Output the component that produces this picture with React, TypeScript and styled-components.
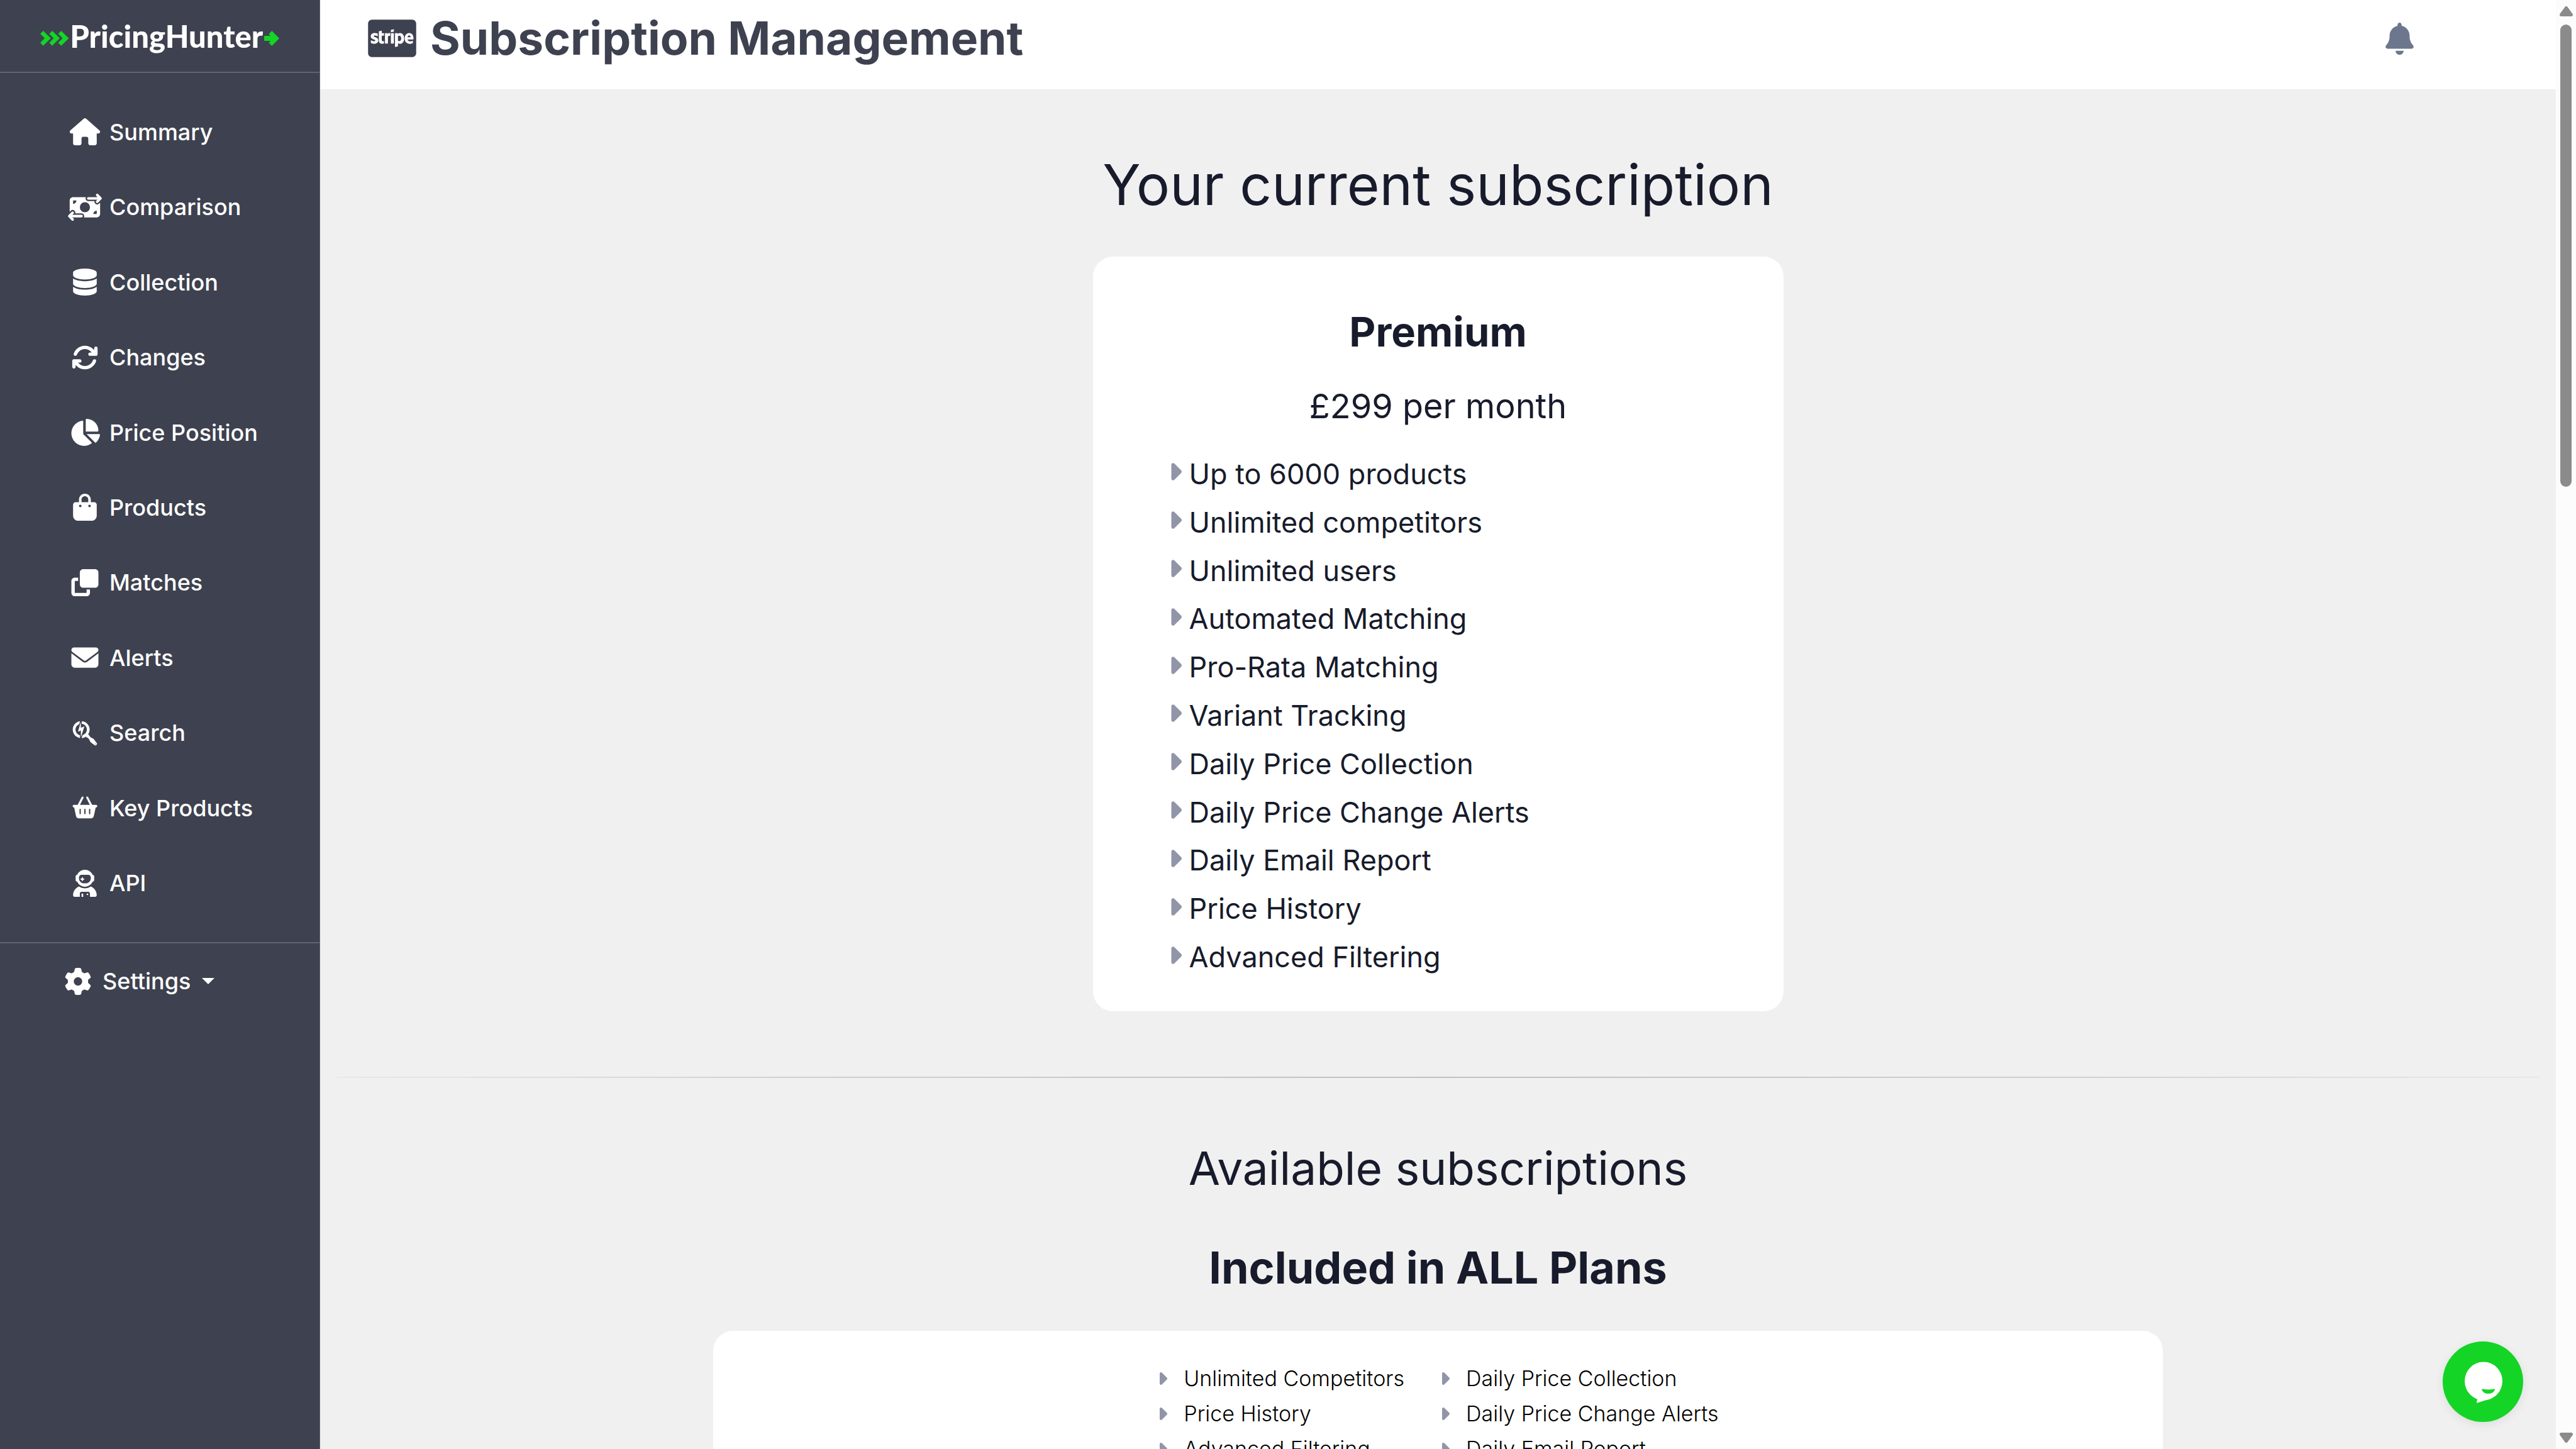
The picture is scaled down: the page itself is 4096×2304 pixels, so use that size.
import React from 'react';
import styled, { createGlobalStyle } from 'styled-components';
import {
  FaArrowsRotate,
  FaBagShopping,
  FaBell,
  FaCaretRight,
  FaCcStripe,
  FaChartPie,
  FaClone,
  FaDatabase,
  FaEnvelope,
  FaGear,
  FaHouse,
  FaMoneyBillTransfer,
  FaSearchengin,
  FaUserAstronaut,
} from 'react-icons/fa6';

const color = {
  slate: '#3e414f',
  slateLine: '#5f6473',
  ink: '#171b2b',
  page: '#f0f0f0',
  green: '#14d426',
  caret: '#9195a8',
  bell: '#6c778d',
  thumb: '#8b8b8b',
};

const GlobalStyle = createGlobalStyle`
  *, *::before, *::after { box-sizing: border-box; }
  body {
    margin: 0;
    color: ${color.ink};
    background: ${color.page};
    font-family: Inter, "Liberation Sans", sans-serif;
  }
  h1, h2, h3, p, ul { margin: 0; padding: 0; }
  ul { list-style: none; }
  svg { display: block; flex: none; }
  button { border: 0; padding: 0; background: none; font: inherit; color: inherit; cursor: pointer; }
`;

const Shell = styled.div`
  display: grid;
  grid-template-columns: 509px minmax(0, 1fr) 32px;
  height: 100vh;
  overflow: hidden;
`;

/* Sidebar */

const Sidebar = styled.aside`
  background: ${color.slate};
  border-right: 1px solid ${color.slateLine};
  color: #fff;
`;

const Brand = styled.a`
  display: flex;
  align-items: center;
  justify-content: center;
  gap: 2px;
  height: 116px;
  border-bottom: 2px solid ${color.slateLine};
  color: #fff;
  font: 900 49px/60px Lato, sans-serif;
  text-decoration: none;
`;

const BrandArrow = styled.svg`
  height: 24px;
  margin-top: 8px;
  fill: ${color.green};
`;

const NavList = styled.ul`
  display: grid;
  grid-auto-rows: 1fr;
  min-height: 1314px;
  margin: 34px 0;
`;

const NavLink = styled.a`
  display: flex;
  align-items: center;
  gap: 12px;
  height: 100%;
  padding-left: 108px;
  color: #fff;
  font-size: 36px;
  font-weight: 500;
  text-decoration: none;
`;

const NavIcon = styled.span`
  svg {
    width: 54px;
    height: 43px;
  }
`;

const SettingsBar = styled.div`
  border-top: 2px solid ${color.slateLine};
  padding: 30px 0 30px 97px;
`;

const SettingsButton = styled.button`
  display: flex;
  align-items: center;
  gap: 12px;
  height: 60px;
  font-size: 36px;
  font-weight: 500;
`;

const DropCaret = styled.span`
  margin-left: 6px;
  border: 10px solid transparent;
  border-top-color: #fff;
  border-bottom: 0;
`;

/* Main column */

const Main = styled.main`
  min-width: 0;
  overflow: hidden;
`;

const TopBar = styled.header`
  display: flex;
  align-items: center;
  gap: 22px;
  height: 142px;
  padding: 0 226px 20px 76px;
  background: #fff;
  color: ${color.slate};
`;

const StripeMark = styled(FaCcStripe)`
  width: 77px;
  height: 68px;
`;

const PageTitle = styled.h1`
  flex: 1;
  font-size: 73px;
  line-height: 88px;
  font-weight: 700;
`;

const BellButton = styled.button`
  color: ${color.bell};

  svg {
    width: 45px;
    height: 51px;
  }
`;

const Content = styled.div`
  display: flex;
  flex-direction: column;
  align-items: center;
  padding: 100px 26px 0;
`;

const headingSize = { large: 89, medium: 73, small: 70 };

const Heading = styled.h2<{ $size: keyof typeof headingSize; $bold?: boolean }>`
  font-size: ${(p) => headingSize[p.$size]}px;
  line-height: 104px;
  font-weight: ${(p) => (p.$bold ? 700 : 400)};
`;

const Card = styled.section`
  border-radius: 32px;
  background: #fff;
`;

const CurrentPlan = styled(Card)`
  width: 1098px;
  margin-top: 62px;
  padding: 80px 48px 48px;
`;

const PlanName = styled.h3`
  font-size: 65px;
  line-height: 80px;
  font-weight: 700;
  text-align: center;
`;

const PlanPrice = styled.p`
  margin: 46px 0 37px;
  font-size: 54px;
  line-height: 64px;
  text-align: center;
`;

const PlanFeatures = styled.ul`
  display: grid;
  grid-auto-rows: 1fr;
  min-height: 845px;
  padding-left: 71px;
`;

const Feature = styled.li`
  display: flex;
  align-items: center;
  gap: 12px;
  font-size: 45px;
`;

const FeatureCaret = styled(FaCaretRight)`
  width: 22px;
  height: 44px;
  margin-bottom: 6px;
  color: ${color.caret};
`;

const Divider = styled.hr`
  width: 100%;
  height: 2px;
  margin: 104px 0 92px;
  border: 0;
  background: linear-gradient(
    90deg,
    rgba(0, 0, 0, 0.03),
    rgba(0, 0, 0, 0.13) 20%,
    rgba(0, 0, 0, 0.2) 50%,
    rgba(0, 0, 0, 0.13) 80%,
    rgba(0, 0, 0, 0.03)
  );
`;

const SubHeadings = styled.div`
  display: grid;
  justify-items: center;
  gap: 54px;
`;

const SharedPlan = styled(Card)`
  display: flex;
  justify-content: center;
  gap: 56px;
  width: 65.8%;
  margin-top: 48px;
  padding: 48px;
`;

const SharedFeature = styled.li`
  display: flex;
  align-items: center;
  gap: 26px;
  color: #000;
  font-size: 34px;
  line-height: 56px;
  font-weight: 300;
`;

const SharedCaret = styled(FaCaretRight)`
  width: 16px;
  height: 32px;
  color: ${color.caret};
`;

/* Scroll rail */

const Rail = styled.div`
  display: flex;
  flex-direction: column;
  align-items: center;
  justify-content: space-between;
  padding: 10px 0;
  background: #fcfcfc;
`;

const RailTrack = styled.div`
  flex: 1;
  padding: 13px 0;
`;

const RailThumb = styled.div`
  width: 18px;
  height: 33%;
  border-radius: 9px;
  background: ${color.thumb};
`;

const RailArrow = styled.svg`
  width: 21px;
  height: 16px;
  fill: ${color.thumb};
  stroke: ${color.thumb};
  stroke-width: 5;
  stroke-linejoin: round;
`;

const ChatButton = styled.button`
  position: absolute;
  right: 84px;
  bottom: 43px;
  width: 128px;
  height: 128px;
  border-radius: 50%;
  background: ${color.green};
  box-shadow: 0 4px 16px rgba(0, 0, 0, 0.08);
`;

function BasketIcon() {
  return (
    <svg viewBox="96 72 240 240" fill="currentColor" aria-hidden="true">
      <path d="M195 101 157 175M237 101l38 74" stroke="currentColor" strokeWidth="18" strokeLinecap="round" />
      <rect x="107" y="165" width="219" height="24" rx="12" />
      <path d="M119 180l18 85q5 20 23 20h113q17 0 22-20l19-85z" />
      <path d="M174 206v38M216 206v38M258 206v38" stroke={color.slate} strokeWidth="11" strokeLinecap="round" />
    </svg>
  );
}

const navItems: { label: string; icon: React.ReactNode }[] = [
  { label: 'Summary', icon: <FaHouse /> },
  { label: 'Comparison', icon: <FaMoneyBillTransfer /> },
  { label: 'Collection', icon: <FaDatabase /> },
  { label: 'Changes', icon: <FaArrowsRotate /> },
  { label: 'Price Position', icon: <FaChartPie /> },
  { label: 'Products', icon: <FaBagShopping /> },
  { label: 'Matches', icon: <FaClone /> },
  { label: 'Alerts', icon: <FaEnvelope /> },
  { label: 'Search', icon: <FaSearchengin /> },
  { label: 'Key Products', icon: <BasketIcon /> },
  { label: 'API', icon: <FaUserAstronaut /> },
];

const planFeatures = [
  'Up to 6000 products',
  'Unlimited competitors',
  'Unlimited users',
  'Automated Matching',
  'Pro-Rata Matching',
  'Variant Tracking',
  'Daily Price Collection',
  'Daily Price Change Alerts',
  'Daily Email Report',
  'Price History',
  'Advanced Filtering',
];

const sharedFeatures = [
  ['Unlimited Competitors', 'Price History', 'Advanced Filtering'],
  ['Daily Price Collection', 'Daily Price Change Alerts', 'Daily Email Report'],
];

const chevron = 'l27-27 68 67-68 68-27-27 40-41z';

export default function App() {
  return (
    <>
      <GlobalStyle />
      <Shell>
        <Sidebar>
          <Brand href="#">
            <BrandArrow viewBox="78 185 258 136" aria-hidden="true">
              <path d={`M78 212${chevron}M159 212${chevron}M240 212${chevron}`} />
            </BrandArrow>
            PricingHunter
            <BrandArrow viewBox="789 91 46 46" aria-hidden="true">
              <path d="M790.500 106.500H808L803.500 101 812.500 91 835 114 812.500 137 803.500 127.500 808 121.500H790.500Q789 121.500 789 120V108Q789 106.500 790.500 106.500z" />
            </BrandArrow>
          </Brand>
          <nav>
            <NavList>
              {navItems.map((item) => (
                <li key={item.label}>
                  <NavLink href="#">
                    <NavIcon>{item.icon}</NavIcon>
                    {item.label}
                  </NavLink>
                </li>
              ))}
            </NavList>
          </nav>
          <SettingsBar>
            <SettingsButton type="button" aria-haspopup="menu">
              <NavIcon>
                <FaGear />
              </NavIcon>
              Settings
              <DropCaret />
            </SettingsButton>
          </SettingsBar>
        </Sidebar>

        <Main>
          <TopBar>
            <StripeMark aria-hidden="true" />
            <PageTitle>Subscription Management</PageTitle>
            <BellButton type="button" aria-label="Notifications">
              <FaBell />
            </BellButton>
          </TopBar>
          <Content>
            <Heading $size="large">Your current subscription</Heading>
            <CurrentPlan>
              <PlanName>Premium</PlanName>
              <PlanPrice>£299 per month</PlanPrice>
              <PlanFeatures>
                {planFeatures.map((text) => (
                  <Feature key={text}>
                    <FeatureCaret aria-hidden="true" />
                    {text}
                  </Feature>
                ))}
              </PlanFeatures>
            </CurrentPlan>
            <Divider />
            <SubHeadings>
              <Heading $size="medium">Available subscriptions</Heading>
              <Heading as="h3" $size="small" $bold>
                Included in ALL Plans
              </Heading>
            </SubHeadings>
            <SharedPlan>
              {sharedFeatures.map((column) => (
                <ul key={column[0]}>
                  {column.map((text) => (
                    <SharedFeature key={text}>
                      <SharedCaret aria-hidden="true" />
                      {text}
                    </SharedFeature>
                  ))}
                </ul>
              ))}
            </SharedPlan>
          </Content>
        </Main>

        <Rail aria-hidden="true">
          <RailArrow viewBox="0 0 21 16">
            <path d="M10.500 2.500 18.500 13.500H2.500z" />
          </RailArrow>
          <RailTrack>
            <RailThumb />
          </RailTrack>
          <RailArrow viewBox="0 0 21 16">
            <path d="M10.500 13.500 18.500 2.500H2.500z" />
          </RailArrow>
        </Rail>
      </Shell>
      <ChatButton type="button" aria-label="Open chat">
        <svg viewBox="0 0 128 128" fill="#fff" aria-hidden="true">
          <ellipse cx="65" cy="63" rx="30" ry="30.500" />
          <path d="M55.500 90 54 96.500Q54 98 55.500 97.500L77 90.500z" />
          <path
            d="M63 75.500Q73 77.500 82 75.500 83.500 75.500 83 77 80 83 72.500 83 65 83 62.300 77 62 75.500 63 75.500z"
            fill={color.green}
          />
        </svg>
      </ChatButton>
    </>
  );
}
